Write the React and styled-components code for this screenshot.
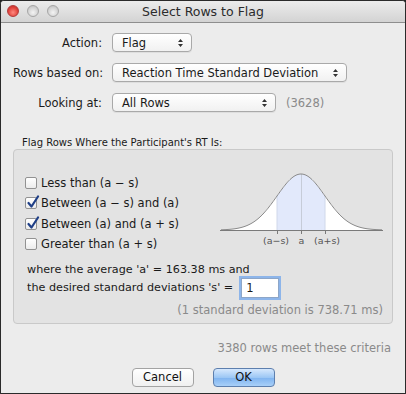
import styled, { createGlobalStyle } from 'styled-components';

const GlobalStyle = createGlobalStyle`
  html, body {
    margin: 0;
    padding: 0;
    background: #222;
  }
  body {
    font-family: "DejaVu Sans", "Liberation Sans", sans-serif;
    color: #1a1a1a;
  }
`;

const Window = styled.div`
  width: 406px;
  height: 394px;
  box-sizing: border-box;
  border: 1px solid #2a2a2a;
  border-radius: 4px 4px 0 0;
  overflow: hidden;
  background: #ececec;
  display: flex;
  flex-direction: column;
`;

const TitleBar = styled.div`
  height: 21px;
  flex: none;
  position: relative;
  display: flex;
  align-items: center;
  justify-content: center;
  background: linear-gradient(#ececec, #d3d3d3);
  border-bottom: 1px solid #8e8e8e;
  font-size: 12.5px;
  color: #2b2b2b;
`;

const Lights = styled.div`
  position: absolute;
  left: 6px;
  top: 4px;
  display: flex;
  gap: 8px;
`;

const Light = styled.span`
  width: 12px;
  height: 12px;
  border-radius: 50%;
  box-sizing: border-box;
  border: 1px solid ${(p) => (p.$red ? '#b33a3a' : '#a6a6a6')};
  background: ${(p) =>
    p.$red
      ? 'radial-gradient(circle at 50% 65%, #ff8a80, #e0413a 60%, #b52d28)'
      : 'radial-gradient(circle at 50% 65%, #f4f4f4, #d2d2d2 60%, #b8b8b8)'};
`;

const Body = styled.div`
  flex: 1;
  display: flex;
  flex-direction: column;
  padding: 10px 12px 0 12px;
`;

const FormGrid = styled.div`
  display: grid;
  grid-template-columns: 89px auto;
  column-gap: 10px;
  row-gap: 11px;
  align-items: center;
`;

const Label = styled.span`
  font-size: 11.5px;
  line-height: 14px;
  text-align: right;
  white-space: nowrap;
`;

const Cell = styled.div`
  display: flex;
  align-items: center;
  gap: 10px;
`;

const Popup = styled.div`
  width: ${(p) => p.$w}px;
  height: 19px;
  box-sizing: border-box;
  border: 1px solid #a9a9a9;
  border-radius: 4px;
  background: linear-gradient(#ffffff, #f1f1f1);
  box-shadow: 0 1px 0 rgba(0, 0, 0, 0.06);
  display: flex;
  align-items: center;
  justify-content: space-between;
  padding: 0 7px 0 9px;
  font-size: 11.5px;
`;

const Muted = styled.span`
  font-size: 11.5px;
  color: #8a8a8a;
`;

const GroupTitle = styled.div`
  font-size: 10px;
  line-height: 12px;
  margin: 25px 0 0 9px;
`;

const Group = styled.div`
  border: 1px solid #c9c9c9;
  border-radius: 4px;
  background: #e3e3e3;
  padding: 20px 9px 6px 11px;
  display: flex;
  flex-direction: column;
`;

const GroupTop = styled.div`
  display: flex;
  justify-content: space-between;
  align-items: flex-start;
`;

const CheckList = styled.div`
  display: flex;
  flex-direction: column;
  gap: 7.5px;
  padding-top: 6px;
`;

const CheckRow = styled.label`
  display: flex;
  align-items: center;
  gap: 4px;
  font-size: 11.5px;
  height: 13px;
`;

const Box = styled.span`
  width: 12px;
  height: 12px;
  box-sizing: border-box;
  border: 1px solid #929292;
  border-radius: 2px;
  background: linear-gradient(#ffffff, #ececec);
  position: relative;
  flex: none;

  svg {
    position: absolute;
    left: 0;
    top: -3px;
  }
`;

const Curve = styled.svg`
  display: block;
`;

const Sentence = styled.div`
  font-size: 11.2px;
  margin-top: 10px;
  padding-left: 2px;
  line-height: 17px;
`;

const InputLine = styled.div`
  display: flex;
  align-items: center;
  gap: 8px;
  height: 20px;
`;

const NumberInput = styled.div`
  width: 38px;
  height: 20px;
  box-sizing: border-box;
  border: 1px solid #8da6c8;
  background: #fff;
  box-shadow: 0 0 0 2px #8db5ea;
  font-size: 11.5px;
  line-height: 16px;
  padding: 1px 0 0 4px;
`;

const Note = styled.div`
  text-align: right;
  font-size: 11.5px;
  line-height: 14px;
  color: #8a8a8a;
  margin-top: 5px;
`;

const Summary = styled.div`
  text-align: right;
  font-size: 11.5px;
  line-height: 14px;
  color: #8a8a8a;
  margin-top: 17px;
  padding-right: 2px;
`;

const Buttons = styled.div`
  display: flex;
  justify-content: center;
  gap: 19px;
  margin-top: 13px;
`;

const Button = styled.div`
  width: 62px;
  height: 19px;
  box-sizing: border-box;
  border-radius: 4px;
  border: 1px solid ${(p) => (p.$primary ? '#5d7fae' : '#a3a3a3')};
  background: ${(p) =>
    p.$primary
      ? 'linear-gradient(#d6e8fd, #9cc7f5 50%, #7eb3f0 51%, #a9d0f8)'
      : 'linear-gradient(#ffffff, #f0f0f0)'};
  display: flex;
  align-items: center;
  justify-content: center;
  font-size: 11.5px;
  color: #111;
`;

const Arrows = () => (
  <svg width="7" height="10" viewBox="0 0 7 10">
    <path d="M1 4 L3.5 1 L6 4 Z M1 6 L3.5 9 L6 6 Z" fill="#333" />
  </svg>
);

const Check = ({ checked, children }) => (
  <CheckRow>
    <Box>
      {checked && (
        <svg width="14" height="14" viewBox="0 0 14 14">
          <path
            d="M2.5 8 L5.5 11.5 L12 1.5"
            fill="none"
            stroke="#1f3f86"
            strokeWidth="2.2"
            strokeLinecap="round"
            strokeLinejoin="round"
          />
        </svg>
      )}
    </Box>
    {children}
  </CheckRow>
);

const BellCurve = () => {
  const c = 81;
  const s = 24;
  const axis = 60;
  const f = (x) => axis - 56 * Math.exp(-((x - c) ** 2) / (2 * s * s));
  const line = [];
  for (let x = 1; x <= 162; x += 1) line.push(`${x},${f(x).toFixed(2)}`);
  const band = [];
  for (let x = c - s; x <= c + s; x += 1) band.push(`${x},${f(x).toFixed(2)}`);
  return (
    <Curve width="163" height="78" viewBox="0 0 163 78">
      <polygon points={`1,${axis} ${line.join(' ')} 162,${axis}`} fill="#fff" />
      <polygon points={`${c - s},${axis} ${band.join(' ')} ${c + s},${axis}`} fill="#e2e9fb" />
      <line x1={c - s} y1={f(c - s)} x2={c - s} y2={axis} stroke="#d0d8ea" />
      <line x1={c + s} y1={f(c + s)} x2={c + s} y2={axis} stroke="#d0d8ea" />
      <line x1={c + 0.5} y1={f(c)} x2={c + 0.5} y2={axis} stroke="#c6ccd8" />
      <polyline points={line.join(' ')} fill="none" stroke="#8a8a8a" strokeWidth="1" />
      <line x1="0" y1={axis + 0.5} x2="163" y2={axis + 0.5} stroke="#7a7a7a" />
      {[c - s, c, c + s].map((x) => (
        <line key={x} x1={x + 0.5} y1={axis} x2={x + 0.5} y2={axis + 4} stroke="#7a7a7a" />
      ))}
      <g fontFamily="DejaVu Sans, sans-serif" fontSize="9.5" fill="#555" textAnchor="middle">
        <text x={c - s - 1} y={axis + 14}>(a−s)</text>
        <text x={c + 0.5} y={axis + 14}>a</text>
        <text x={c + s + 2} y={axis + 14}>(a+s)</text>
      </g>
    </Curve>
  );
};

export default function App() {
  return (
    <>
      <GlobalStyle />
      <Window>
        <TitleBar>
          <Lights>
            <Light $red />
            <Light />
            <Light />
          </Lights>
          Select Rows to Flag
        </TitleBar>
        <Body>
          <FormGrid>
            <Label>Action:</Label>
            <Cell>
              <Popup $w={80}>
                Flag
                <Arrows />
              </Popup>
            </Cell>
            <Label>Rows based on:</Label>
            <Cell>
              <Popup $w={235}>
                Reaction Time Standard Deviation
                <Arrows />
              </Popup>
            </Cell>
            <Label>Looking at:</Label>
            <Cell>
              <Popup $w={164}>
                All Rows
                <Arrows />
              </Popup>
              <Muted>(3628)</Muted>
            </Cell>
          </FormGrid>

          <GroupTitle>Flag Rows Where the Participant's RT Is:</GroupTitle>
          <Group>
            <GroupTop>
              <CheckList>
                <Check>Less than (a − s)</Check>
                <Check checked>Between (a − s) and (a)</Check>
                <Check checked>Between (a) and (a + s)</Check>
                <Check>Greater than (a + s)</Check>
              </CheckList>
              <BellCurve />
            </GroupTop>
            <Sentence>
              where the average 'a' = 163.38 ms and
              <InputLine>
                the desired standard deviations 's' =
                <NumberInput>1</NumberInput>
              </InputLine>
            </Sentence>
            <Note>(1 standard deviation is 738.71 ms)</Note>
          </Group>

          <Summary>3380 rows meet these criteria</Summary>
          <Buttons>
            <Button>Cancel</Button>
            <Button $primary>OK</Button>
          </Buttons>
        </Body>
      </Window>
    </>
  );
}
